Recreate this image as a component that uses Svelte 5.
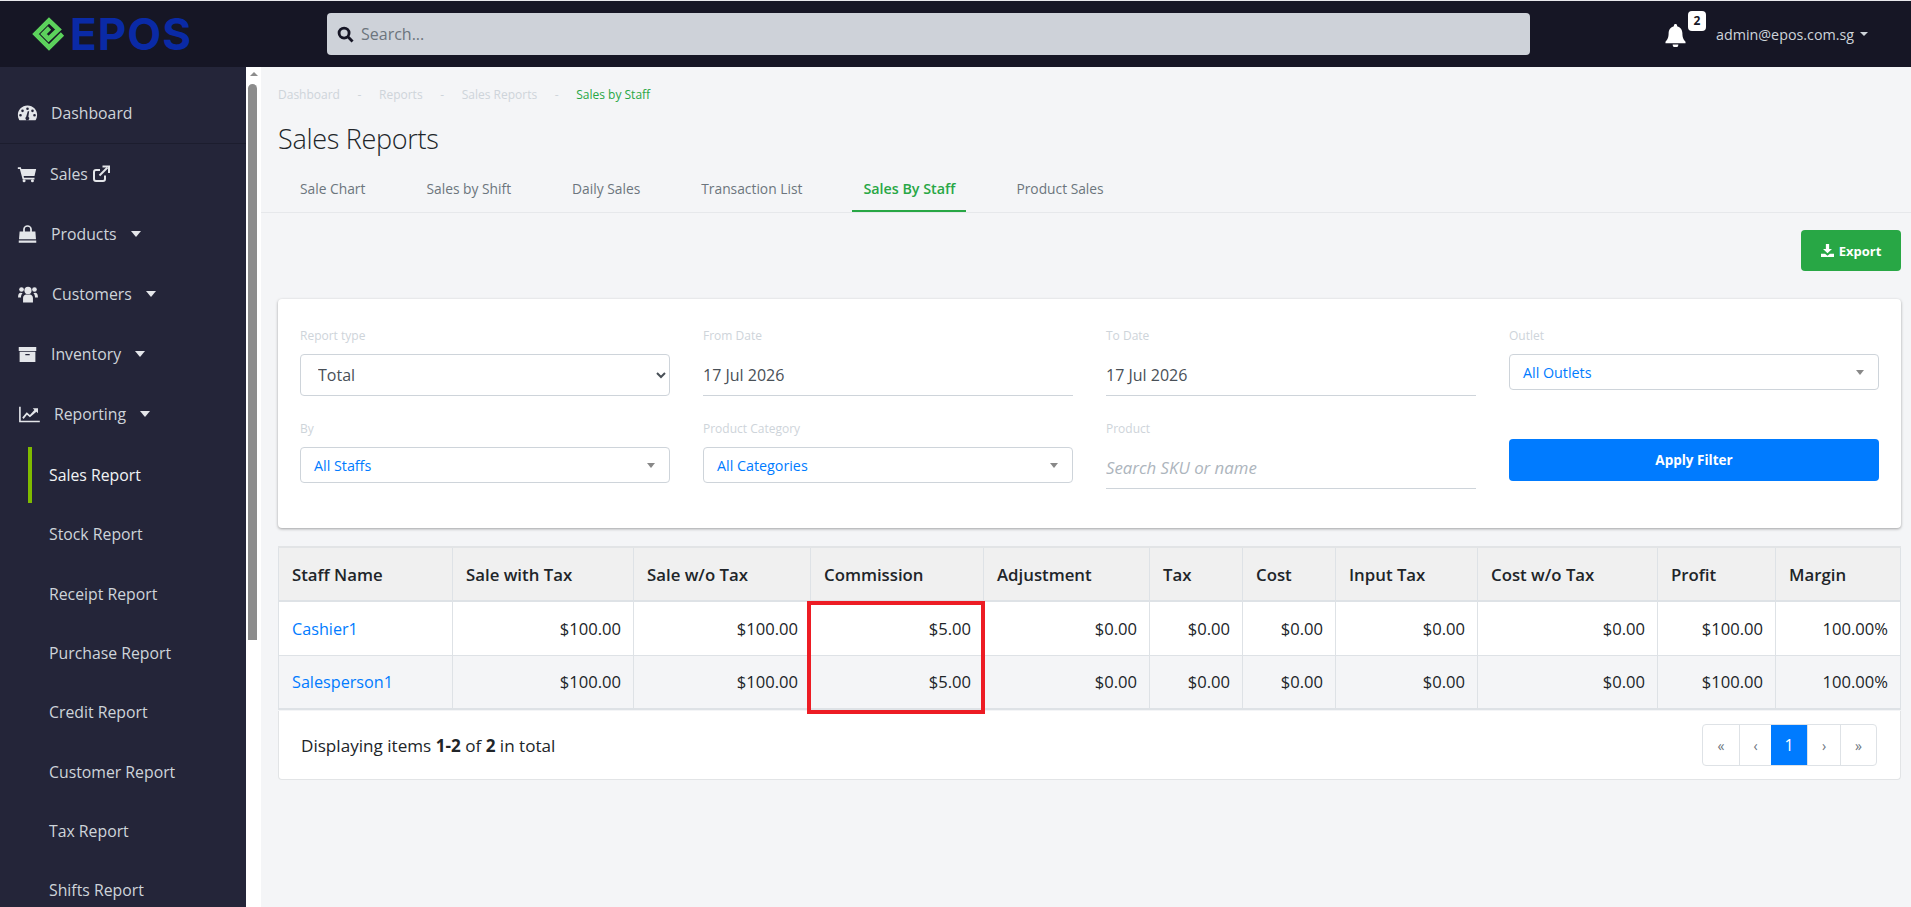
<script lang="ts">
	interface Row {
		name: string;
		values: string[];
	}

	const nav = [
		{ label: 'Dashboard', icon: 'gauge' },
		{ label: 'Sales', icon: 'cart', external: true },
		{ label: 'Products', icon: 'bag', caret: true },
		{ label: 'Customers', icon: 'users', caret: true },
		{ label: 'Inventory', icon: 'box', caret: true },
		{ label: 'Reporting', icon: 'chart', caret: true }
	];
	const subNav = ['Sales Report', 'Stock Report', 'Receipt Report', 'Purchase Report', 'Credit Report', 'Customer Report', 'Tax Report', 'Shifts Report'];
	const crumbs = ['Dashboard', 'Reports', 'Sales Reports'];
	const tabs = ['Sale Chart', 'Sales by Shift', 'Daily Sales', 'Transaction List', 'Sales By Staff', 'Product Sales'];
	const columns = ['Staff Name', 'Sale with Tax', 'Sale w/o Tax', 'Commission', 'Adjustment', 'Tax', 'Cost', 'Input Tax', 'Cost w/o Tax', 'Profit', 'Margin'];
	const values = ['$100.00', '$100.00', '$5.00', '$0.00', '$0.00', '$0.00', '$0.00', '$0.00', '$100.00', '100.00%'];
	const rows: Row[] = [
		{ name: 'Cashier1', values },
		{ name: 'Salesperson1', values }
	];
	const pages = ['«', '‹', '1', '›', '»'];
</script>

{#snippet navIcon(name: string)}
	<svg class="nav-icon {name}" viewBox="0 0 24 20" fill="currentColor">
		{#if name === 'gauge'}
			<path fill-rule="evenodd" d="M12 1.500C5.600 1.500 1 6.400 1 12.400c0 2 .5 3.700 1.400 5.300.3.5.7.7 1.300.7h16.600c.6 0 1-.2 1.300-.7.9-1.600 1.400-3.300 1.400-5.300C23 6.400 18.400 1.500 12 1.500zM12 3.600a1.500 1.500 0 1 1 0 3 1.500 1.500 0 0 1 0-3zM6.300 6a1.500 1.500 0 1 1 0 3 1.500 1.500 0 0 1 0-3zM4 11a1.500 1.500 0 1 1 0 3 1.500 1.500 0 0 1 0-3zm16 0a1.500 1.500 0 1 1 0 3 1.500 1.500 0 0 1 0-3zm-2.300-5a1.500 1.500 0 1 1 0 3 1.500 1.500 0 0 1 0-3zM13.900 8l-.9 6.300a2.200 2.200 0 1 1-2.500.1L12.300 8z" />
		{:else if name === 'cart'}
			<path d="M1 2h3.600l.6 2H23l-2 8.500H8l.4 2H21V16.500H6.800L3.400 4H1z" /><circle cx="8.500" cy="18" r="1.800" /><circle cx="18.500" cy="18" r="1.800" />
		{:else if name === 'bag'}
			<path fill-rule="evenodd" d="M3 7h4V4.500a5 4.500 0 0 1 10 0V7h4l.7 9H2.300zM9 7h6V4.500a3 2.800 0 0 0-6 0zM2 17.300h20V20H2z" />
		{:else if name === 'users'}
			<circle cx="12" cy="6" r="4" /><circle cx="4.800" cy="5" r="2.600" /><circle cx="19.200" cy="5" r="2.600" />
			<path d="M6.500 19.500v-5c0-2.500 1.800-4 3.500-4h4c1.700 0 3.500 1.500 3.500 4v5zM1 13c0-3 1.200-4.500 3-4.500 .9 0 1.500.3 2 .8-1.200 1-1.800 2.600-1.800 4.700H1zM23 13c0-3-1.200-4.500-3-4.500-.9 0-1.500.3-2 .8 1.200 1 1.800 2.600 1.800 4.700H23z" />
		{:else if name === 'box'}
			<path fill-rule="evenodd" d="M2 2h20v4.500H2zM3 7.500h18V19H3zM9.500 10v1.500h5V10z" />
		{:else if name === 'chart'}
			<path d="M1 2h1.800v15.500H24v1.800H1z" /><path d="M4.500 14l5-6 3.500 3 5-5.500-1.800-1.800H22v5.500l-1.800-1.800L13 13.500 9.700 10.700 6 15.500z" />
		{/if}
	</svg>
{/snippet}

<div class="app">
	<header class="topbar">
		<div class="brand">
			<svg class="brand-mark" viewBox="0 0 36 36" fill="none" stroke="#5cd15c" stroke-width="4.600" stroke-linejoin="miter">
				<path d="M31.500 18 18 31.500 4.500 18 18 4.500 27.500 13.500 17.500 23 12.500 18 18.500 12" />
			</svg>
			<span class="brand-name">EPOS</span>
		</div>

		<div class="search">
			<svg viewBox="0 0 18 18" width="17" height="17" fill="none" stroke="#161625" stroke-width="3">
				<circle cx="7.500" cy="7.500" r="5.300" /><path d="M11.500 11.500 16.500 16.500" />
			</svg>
			<input type="text" placeholder="Search..." />
		</div>

		<div class="user">
			<div class="bell">
				<svg viewBox="0 0 22 24" width="21" height="23" fill="#fff">
					<path d="M11 0c1 0 1.700.7 1.700 1.700v.6c3.500.8 5.500 3.800 5.500 7.200 0 5.500 1.500 7 3.300 9v1.500H.5V18.500c1.800-2 3.300-3.500 3.300-9 0-3.400 2-6.400 5.500-7.200v-.6C9.300.7 10 0 11 0zM8 21.500h6a3 3 0 0 1-6 0z" />
				</svg>
				<span class="badge">2</span>
			</div>
			<span class="email">admin@epos.com.sg</span>
			<span class="user-caret"></span>
		</div>
	</header>

	<div class="body">
		<aside class="sidebar">
			<nav>
				{#each nav as item, i}
					<div class="nav-item" class:divided={i === 0}>
						{@render navIcon(item.icon)}
						<span class="nav-label">{item.label}</span>
						{#if item.external}
							<svg class="ext" viewBox="0 0 18 18" fill="none" stroke="currentColor" stroke-width="2">
								<path d="M13 10.500V14a2 2 0 0 1-2 2H4a2 2 0 0 1-2-2V7a2 2 0 0 1 2-2h4" />
								<path d="M7.500 10.500 15.500 2.500" /><path d="M10.500 1.500H17V8" fill="none" />
							</svg>
						{/if}
						{#if item.caret}<span class="nav-caret"></span>{/if}
					</div>
				{/each}
				<div class="sub-list">
					{#each subNav as item, i}
						<div class="sub-item" class:active={i === 0}>{item}</div>
					{/each}
				</div>
			</nav>
		</aside>

		<div class="scrollbar">
			<span class="scroll-up"></span>
			<span class="scroll-thumb"></span>
		</div>

		<main class="main">
			<div class="page-head">
				<div class="crumbs">
					{#each crumbs as crumb}
						<span>{crumb}</span><span class="sep">-</span>
					{/each}
					<span class="current">Sales by Staff</span>
				</div>
				<h1>Sales Reports</h1>
				<div class="tabs">
					{#each tabs as tab}
						<span class="tab" class:active={tab === 'Sales By Staff'}>{tab}</span>
					{/each}
				</div>
			</div>

			<div class="content">
				<div class="actions">
					<button class="export">
						<svg viewBox="0 0 16 16" width="13" height="13" fill="#fff">
							<path d="M6 0h4v6h3.500L8 11.500 2.500 6H6zM0 12h5l3 2.500 3-2.500h5v4H0z" />
						</svg>
						Export
					</button>
				</div>

				<section class="filters">
					<div class="field">
						<label for="report-type">Report type</label>
						<select id="report-type" class="native"><option>Total</option></select>
					</div>
					<div class="field">
						<label for="from-date">From Date</label>
						<input id="from-date" class="underline" value="17 Jul 2026" />
					</div>
					<div class="field">
						<label for="to-date">To Date</label>
						<input id="to-date" class="underline" value="17 Jul 2026" />
					</div>
					<div class="field">
						<span class="label">Outlet</span>
						<div class="picker">All Outlets<span class="picker-caret"></span></div>
					</div>
					<div class="field">
						<span class="label">By</span>
						<div class="picker">All Staffs<span class="picker-caret"></span></div>
					</div>
					<div class="field">
						<span class="label">Product Category</span>
						<div class="picker">All Categories<span class="picker-caret"></span></div>
					</div>
					<div class="field">
						<label for="product">Product</label>
						<input id="product" class="underline product" placeholder="Search SKU or name" />
					</div>
					<div class="field apply-cell">
						<button class="apply">Apply Filter</button>
					</div>
				</section>

				<section class="report">
					<div class="table-wrap">
						<table>
							<thead>
								<tr>
									{#each columns as col}<th>{col}</th>{/each}
								</tr>
							</thead>
							<tbody>
								{#each rows as row}
									<tr>
										<td><span class="staff">{row.name}</span></td>
										{#each row.values as value}<td class="num">{value}</td>{/each}
									</tr>
								{/each}
							</tbody>
						</table>
						<div class="highlight"></div>
					</div>
					<div class="table-foot">
						<span>Displaying items <b>1-2</b> of <b>2</b> in total</span>
						<div class="pager">
							{#each pages as page}
								<span class="page" class:active={page === '1'}>{page}</span>
							{/each}
						</div>
					</div>
				</section>
			</div>
		</main>
	</div>
</div>

<style>
	:global(body) {
		margin: 0;
		font-family: 'Open Sans', 'Noto Sans', sans-serif;
		color: #212529;
	}

	.app {
		display: flex;
		flex-direction: column;
		height: 100vh;
		overflow: hidden;
	}

	.topbar {
		display: flex;
		align-items: center;
		flex: 0 0 67px;
		box-sizing: border-box;
		border-top: 1px solid #e8e8ec;
		background: #161625;
	}

	.brand {
		display: flex;
		align-items: center;
		width: 327px;
		padding-left: 31px;
		box-sizing: border-box;
	}

	.brand-mark {
		width: 36px;
		height: 36px;
	}

	.brand-name {
		margin-left: 3px;
		font-family: Inter, sans-serif;
		font-size: 44px;
		font-weight: 700;
		line-height: 1;
		color: #0a2aa6;
		letter-spacing: 1px;
	}

	.search {
		display: flex;
		align-items: center;
		gap: 5px;
		width: 1203px;
		height: 42px;
		padding-left: 10px;
		box-sizing: border-box;
		background: #ced2d9;
		border-radius: 4px;
	}

	.search input {
		flex: 1;
		border: 0;
		outline: 0;
		background: transparent;
		font: inherit;
		font-size: 16px;
	}

	.search input::placeholder {
		color: #6c757d;
	}

	.user {
		display: flex;
		align-items: center;
		margin-left: 135px;
	}

	.bell {
		position: relative;
		display: flex;
		margin-top: 3px;
	}

	.badge {
		position: absolute;
		left: 23px;
		top: -13px;
		width: 18px;
		height: 20px;
		background: #fff;
		border-radius: 4px;
		color: #161625;
		font-size: 12px;
		font-weight: 700;
		line-height: 20px;
		text-align: center;
	}

	.email {
		margin-left: 30px;
		font-size: 14.300px;
		color: #ced4da;
	}

	.user-caret {
		margin-left: 6px;
		border: 4px solid transparent;
		border-top-color: #ced4da;
		border-bottom: 0;
	}

	.body {
		display: flex;
		flex: 1;
		min-height: 0;
	}

	.sidebar {
		flex: 0 0 246px;
		background: #242539;
		overflow: hidden;
		color: #ced4da;
		font-size: 15.800px;
	}

	.nav-item {
		display: flex;
		align-items: center;
		height: 60px;
		padding-left: 17px;
		box-sizing: border-box;
	}

	.nav-item.divided {
		height: 77px;
		padding-top: 16px;
		border-bottom: 1px solid #1c1d2e;
	}

	.nav-icon {
		flex: none;
		width: 21px;
		height: 18px;
		color: #e4e6ea;
	}

	.nav-icon.cart {
		width: 20px;
	}

	.nav-icon.users {
		width: 22px;
	}

	.nav-icon.chart {
		width: 24px;
	}

	.nav-label {
		margin-left: 13px;
	}

	.ext {
		width: 18px;
		height: 18px;
		margin-left: 4px;
		color: #e4e6ea;
	}

	.nav-caret {
		margin-left: 14px;
		border: 5.500px solid transparent;
		border-top: 6px solid #e4e6ea;
		border-bottom: 0;
	}

	.sub-list {
		padding-top: 1.500px;
	}

	.sub-item {
		display: flex;
		align-items: center;
		height: 59.300px;
		padding-left: 49px;
		position: relative;
	}

	.sub-item.active {
		color: #f1f3f5;
	}

	.sub-item.active::before {
		content: '';
		position: absolute;
		left: 28px;
		top: 1px;
		bottom: 2px;
		width: 4px;
		background: #7fba00;
	}

	.scrollbar {
		flex: 0 0 15px;
		display: flex;
		flex-direction: column;
		align-items: center;
		background: #fff;
	}

	.scroll-up {
		margin-top: 5px;
		border: 4.500px solid transparent;
		border-bottom-color: #8c8c8c;
		border-top: 0;
	}

	.scroll-thumb {
		width: 9px;
		height: 556px;
		margin-top: 8px;
		margin-right: 3px;
		background: #8c8c8c;
		border-radius: 5px 5px 0 0;
	}

	.main {
		flex: 1;
		min-width: 0;
		background: #f4f5f7;
	}

	.page-head {
		padding: 19px 0 0 17px;
		border-bottom: 1px solid #e6e8eb;
		margin-left: 0;
	}

	.crumbs {
		display: flex;
		font-size: 12px;
		line-height: 18px;
		color: #ced4da;
	}

	.crumbs .sep {
		margin: 0 17.600px;
	}

	.crumbs .current {
		color: #28a745;
	}

	h1 {
		margin: 14px 0 8px;
		font-size: 27px;
		font-weight: 300;
		line-height: 42px;
		letter-spacing: -0.3px;
	}

	.tabs {
		display: flex;
		gap: 39px;
		padding-left: 11px;
	}

	.tab {
		padding: 0 11px;
		height: 44px;
		line-height: 42px;
		box-sizing: border-box;
		font-size: 13.800px;
		color: #6c757d;
	}

	.tab.active {
		border-bottom: 2px solid #28a745;
		color: #28a745;
		font-weight: 600;
		font-size: 14.300px;
	}

	.content {
		padding: 17px 10px 0 17px;
	}

	.actions {
		display: flex;
		justify-content: flex-end;
	}

	.export {
		display: flex;
		align-items: center;
		justify-content: center;
		gap: 5px;
		width: 100px;
		height: 41px;
		border: 0;
		border-radius: 4px;
		background: #28a745;
		color: #fff;
		font: inherit;
		font-size: 13px;
		font-weight: 700;
	}

	.filters {
		display: grid;
		grid-template-columns: repeat(4, 1fr);
		gap: 24px 33px;
		align-items: start;
		margin-top: 28px;
		padding: 28px 22px 39px;
		background: #fff;
		border-radius: 4px;
		box-shadow: 0 1px 3px rgba(0, 0, 0, 0.35);
	}

	.field {
		display: flex;
		flex-direction: column;
	}

	label,
	.label {
		margin-bottom: 9px;
		font-size: 12px;
		line-height: 18px;
		color: #ced4da;
	}

	.native {
		height: 42px;
		padding: 0 13px;
		border: 1px solid #ced4da;
		border-radius: 4px;
		background: #fff;
		font: inherit;
		font-size: 16px;
		color: #495057;
	}

	.underline {
		height: 42px;
		padding: 0;
		box-sizing: border-box;
		border: 0;
		border-bottom: 1px solid #ced4da;
		outline: 0;
		font: inherit;
		font-size: 16px;
		color: #495057;
	}

	.product {
		font-size: 16.800px;
	}

	.product::placeholder {
		font-style: italic;
		color: #adb5bd;
	}

	.picker {
		display: flex;
		align-items: center;
		justify-content: space-between;
		height: 36px;
		padding: 0 14px 0 13px;
		box-sizing: border-box;
		border: 1px solid #ced4da;
		border-radius: 4px;
		font-size: 14.300px;
		color: #007bff;
	}

	.picker-caret {
		border: 4px solid transparent;
		border-top: 5px solid #888;
		border-bottom: 0;
	}

	.apply-cell {
		padding-top: 19px;
	}

	.apply {
		height: 42px;
		border: 0;
		border-radius: 4px;
		background: #007bff;
		color: #fff;
		font: inherit;
		font-size: 13.500px;
		font-weight: 700;
	}

	.report {
		margin-top: 18px;
	}

	.table-wrap {
		position: relative;
	}

	table {
		width: 100%;
		table-layout: fixed;
		border-collapse: collapse;
		border-top: 2px solid #e2e4e6;
		background: #fff;
		font-size: 16.600px;
	}

	th,
	td {
		box-sizing: border-box;
		padding: 0 12px 0 13px;
		border: 1px solid #dee2e6;
	}

	th:nth-child(1) { width: 174px; }
	th:nth-child(2) { width: 181px; }
	th:nth-child(3) { width: 177px; }
	th:nth-child(4) { width: 173px; }
	th:nth-child(5) { width: 166px; }
	th:nth-child(6) { width: 93px; }
	th:nth-child(7) { width: 93px; }
	th:nth-child(8) { width: 142px; }
	th:nth-child(9) { width: 180px; }
	th:nth-child(10) { width: 118px; }

	th {
		height: 54px;
		border-bottom-width: 2px;
		background: #f0f0f0;
		font-size: 16.800px;
		font-weight: 600;
		text-align: left;
		white-space: nowrap;
	}

	td {
		height: 54px;
	}

	tbody tr:last-child td {
		border-bottom-width: 2px;
	}

	tbody tr:nth-child(even) {
		background: #f4f5f7;
	}

	.num {
		text-align: right;
	}

	.staff {
		color: #007bff;
		font-size: 16.200px;
	}

	.highlight {
		position: absolute;
		left: 529px;
		top: 55px;
		width: 178px;
		height: 113px;
		box-sizing: border-box;
		border: 4px solid #ed1c24;
		pointer-events: none;
	}

	.table-foot {
		display: flex;
		align-items: center;
		justify-content: space-between;
		height: 69px;
		margin-top: 1px;
		padding: 0 23px 0 22px;
		box-sizing: border-box;
		background: #fff;
		border: 1px solid #e2e4e6;
		border-top: 0;
		border-radius: 0 0 4px 4px;
		font-size: 17.100px;
	}

	.table-foot b {
		font-weight: 700;
	}

	.pager {
		display: flex;
		height: 42px;
		border: 1px solid #dee2e6;
		border-radius: 4px;
		box-sizing: border-box;
	}

	.page {
		display: flex;
		align-items: center;
		justify-content: center;
		box-sizing: border-box;
		width: 36px;
		border-left: 1px solid #dee2e6;
		font-size: 14px;
		color: #6c757d;
	}

	.page:first-child {
		border-left: 0;
	}

	.page:nth-child(2) {
		width: 32px;
	}

	.page:nth-child(4) {
		width: 33px;
	}

	.page.active {
		background: #007bff;
		color: #fff;
		font-size: 16px;
		border-left: 0;
	}
</style>
